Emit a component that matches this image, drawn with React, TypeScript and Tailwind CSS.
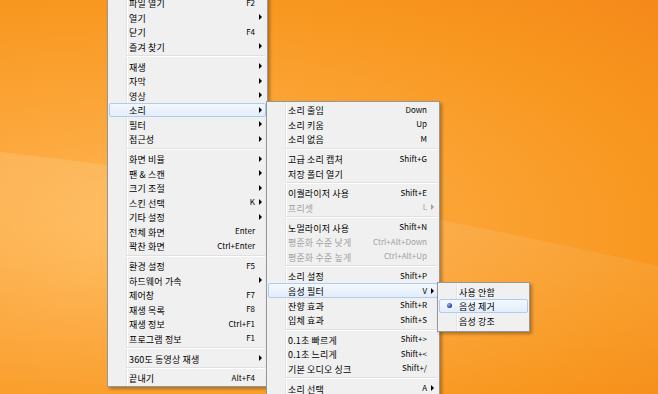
import React from "react";

type Row =
  | "sep"
  | {
      label: string;
      keys?: string;
      arrow?: boolean;
      disabled?: boolean;
      active?: boolean;
      radio?: boolean;
    };

const mainItems: Row[] = [
  { label: "파일 열기", keys: "F2" },
  { label: "열기", arrow: true },
  { label: "닫기", keys: "F4" },
  { label: "즐겨 찾기", arrow: true },
  "sep",
  { label: "재생", arrow: true },
  { label: "자막", arrow: true },
  { label: "영상", arrow: true },
  { label: "소리", arrow: true, active: true },
  { label: "필터", arrow: true },
  { label: "접근성", arrow: true },
  "sep",
  { label: "화면 비율", arrow: true },
  { label: "팬 & 스캔", arrow: true },
  { label: "크기 조절", arrow: true },
  { label: "스킨 선택", keys: "K", arrow: true },
  { label: "기타 설정", arrow: true },
  { label: "전체 화면", keys: "Enter" },
  { label: "꽉찬 화면", keys: "Ctrl+Enter" },
  "sep",
  { label: "환경 설정", keys: "F5" },
  { label: "하드웨어 가속", arrow: true },
  { label: "제어창", keys: "F7" },
  { label: "재생 목록", keys: "F8" },
  { label: "재생 정보", keys: "Ctrl+F1" },
  { label: "프로그램 정보", keys: "F1" },
  "sep",
  { label: "360도 동영상 재생", arrow: true },
  "sep",
  { label: "끝내기", keys: "Alt+F4" },
];

const soundItems: Row[] = [
  { label: "소리 줄임", keys: "Down" },
  { label: "소리 키움", keys: "Up" },
  { label: "소리 없음", keys: "M" },
  "sep",
  { label: "고급 소리 캡처", keys: "Shift+G" },
  { label: "저장 폴더 열기" },
  "sep",
  { label: "이퀄라이저 사용", keys: "Shift+E" },
  { label: "프리셋", keys: "L", arrow: true, disabled: true },
  "sep",
  { label: "노멀라이저 사용", keys: "Shift+N" },
  { label: "평준화 수준 낮게", keys: "Ctrl+Alt+Down", disabled: true },
  { label: "평준화 수준 높게", keys: "Ctrl+Alt+Up", disabled: true },
  "sep",
  { label: "소리 설정", keys: "Shift+P" },
  { label: "음성 필터", keys: "V", arrow: true, active: true },
  { label: "잔향 효과", keys: "Shift+R" },
  { label: "입체 효과", keys: "Shift+S" },
  "sep",
  { label: "0.1초 빠르게", keys: "Shift+>" },
  { label: "0.1초 느리게", keys: "Shift+<" },
  { label: "기본 오디오 싱크", keys: "Shift+/" },
  "sep",
  { label: "소리 선택", keys: "A", arrow: true },
];

const voiceItems: Row[] = [
  { label: "사용 안함" },
  { label: "음성 제거", active: true, radio: true },
  { label: "음성 강조" },
];

function Menu({ items, className }: { items: Row[]; className: string }) {
  return (
    <div
      className={`absolute border border-[#979797] bg-[#f0f0f0] shadow-[2px_2px_3px_rgba(0,0,0,0.3)] ${className}`}
    >
      {/* gutter line */}
      <div className="absolute top-0 bottom-0 left-[18px] w-[2px] border-l border-[#e2e3e3] bg-white" />
      {items.map((it, i) =>
        it === "sep" ? (
          <div key={i} className="relative h-[5.2px] flex items-center">
            <div className="ml-[18px] mr-[2px] flex-1 h-[2px] border-t border-[#e0e0e0] bg-white" />
          </div>
        ) : (
          <div
            key={i}
            className={`relative mx-[1px] h-[14.55px] flex items-center rounded-[2px] border ${
              it.active
                ? "border-[#aecbf0] bg-[linear-gradient(#f3f8fe,#e3edfa)]"
                : "border-transparent"
            } ${it.disabled ? "text-[#a0a0a0]" : "text-black"}`}
          >
            <div className="w-[19px] h-full flex items-center justify-center shrink-0">
              {it.radio && (
                <div className="w-[5px] h-[5px] rounded-full bg-[radial-gradient(circle_at_35%_35%,#9fb2f0,#243a96_70%)]" />
              )}
            </div>
            <span className="flex-1 whitespace-nowrap text-[9px] tracking-[0.15px] translate-y-[0.6px]">
              {it.label}
            </span>
            {it.keys && <span className="whitespace-nowrap text-[8px]">{it.keys}</span>}
            <div className="w-[10px] h-full flex items-center pl-[4px] shrink-0">
              {it.arrow && (
                <div
                  className={`w-0 h-0 border-y-[3px] border-y-transparent border-l-[3px] ${
                    it.disabled ? "border-l-[#a0a0a0]" : "border-l-black"
                  }`}
                />
              )}
            </div>
          </div>
        )
      )}
    </div>
  );
}

export default function App() {
  return (
    <div
      className="relative w-[658px] h-[394px] overflow-hidden bg-[radial-gradient(ellipse_at_22%_58%,#ffb956_0%,#fca83d_32%,#f8971f_72%,#f5891a_100%)] leading-none"
      style={{ fontFamily: '"Noto Sans CJK KR", "Noto Sans", sans-serif' }}
    >
      {/* wallpaper wave */}
      <svg className="absolute inset-0" width="658" height="394" viewBox="0 0 658 394">
        <defs>
          <linearGradient id="wave" x1="0" y1="0" x2="0" y2="1">
            <stop offset="0" stopColor="#ffffff" stopOpacity="0.13" />
            <stop offset="1" stopColor="#ffffff" stopOpacity="0" />
          </linearGradient>
        </defs>
        <path d="M0 152 Q 300 185 658 266 L 658 394 L 0 394 Z" fill="url(#wave)" />
      </svg>

      <Menu items={mainItems} className="left-[107px] top-[-6.5px] w-[161px] py-[1px]" />
      <Menu items={soundItems} className="left-[266px] top-[100.5px] w-[174px] py-[1px]" />
      <Menu items={voiceItems} className="left-[437px] top-[281.5px] w-[93px] pt-[1.5px] pb-[3px]" />
    </div>
  );
}
